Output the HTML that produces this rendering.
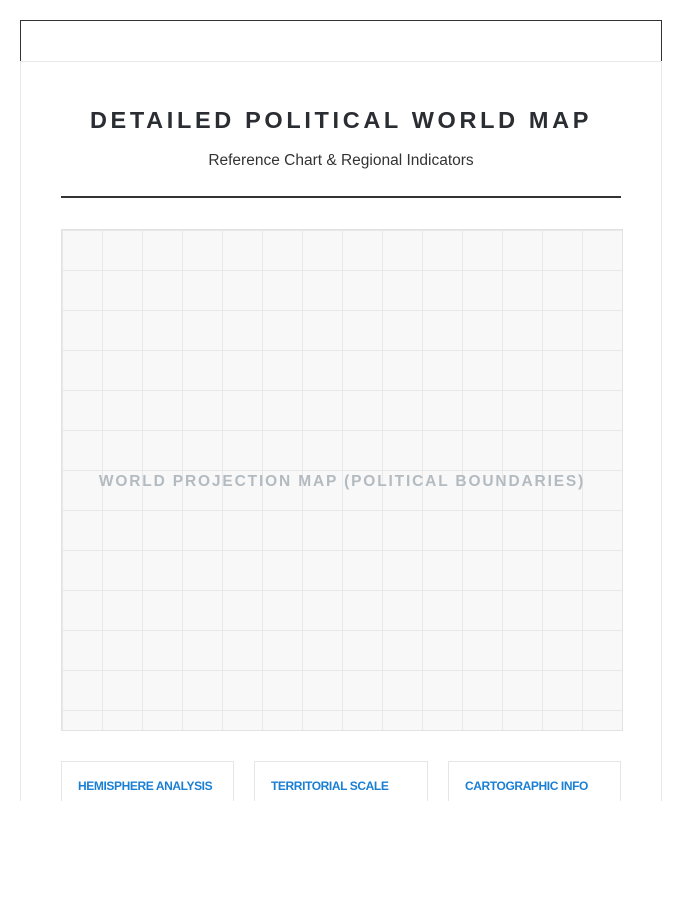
<!DOCTYPE html>
<html><head><meta charset="utf-8"><style>
*{box-sizing:border-box;margin:0;padding:0}
body{width:700px;height:900px;background:#fff;font-family:"Liberation Sans",sans-serif;position:relative;overflow:hidden}
.clip{position:absolute;left:0;top:0;width:700px;height:801px;overflow:hidden}
.top{position:absolute;left:20px;top:20px;width:642px;height:42px;border:1px solid #333;border-bottom:none}
.card{position:absolute;left:20px;top:61px;width:642px;height:800px;border:1px solid #e8e8e8}
h1{position:absolute;left:20px;width:642px;top:107px;text-align:center;font-size:23.5px;font-weight:bold;letter-spacing:3.65px;color:#2a2e33}
.sub{position:absolute;left:20px;width:642px;top:152px;text-align:center;font-size:15.5px;color:#333}
.rule{position:absolute;left:61px;top:196px;width:560px;height:2px;background:#333}
.map{position:absolute;left:61px;top:229px;width:562px;height:502px;border:1px solid #e2e2e2;background-color:#f8f8f8;
background-image:linear-gradient(to right,#e8e8e8 1px,transparent 1px),linear-gradient(to bottom,#e8e8e8 1px,transparent 1px);
background-size:40px 40px;background-position:0px 0px}
.mt{position:absolute;left:0;right:0;top:243px;text-align:center;font-size:15.5px;font-weight:bold;letter-spacing:1.85px;color:#b3bbc1}
.b{position:absolute;top:761px;height:60px;border:1px solid #e6e6e6;font-size:12px;font-weight:bold;color:#1a7fd4;padding:17px 0 0 16px;letter-spacing:-0.4px}
</style></head><body>
<div class="clip">
<div class="top"></div>
<div class="card"></div>
<h1>DETAILED POLITICAL WORLD MAP</h1>
<div class="sub">Reference Chart &amp; Regional Indicators</div>
<div class="rule"></div>
<div class="map"><div class="mt">WORLD PROJECTION MAP (POLITICAL BOUNDARIES)</div></div>
<div class="b" style="left:61px;width:173px">HEMISPHERE ANALYSIS</div>
<div class="b" style="left:254px;width:174px">TERRITORIAL SCALE</div>
<div class="b" style="left:448px;width:173px">CARTOGRAPHIC INFO</div>
</div>
</body></html>
